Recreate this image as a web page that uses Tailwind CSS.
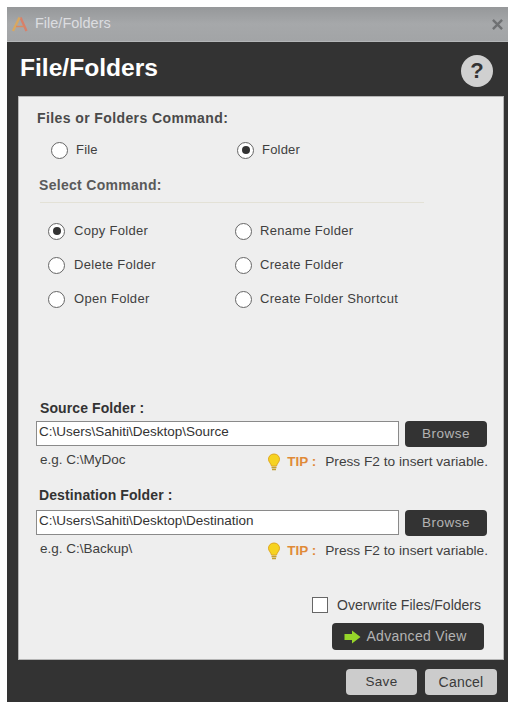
<!doctype html>
<html><head><meta charset="utf-8"><script src="https://cdn.jsdelivr.net/npm/@tailwindcss/browser@4"></script></head>
<body class="bg-white font-['Liberation_Sans',Arial,sans-serif] text-[#3f3f3f]">
<div class="w-[516px] h-[708px] pt-[7px] pl-[7px] overflow-hidden">
<div class="w-[501px] h-[695px] bg-[#333333] flex flex-col">
  <div class="h-[35px] shrink-0 bg-gradient-to-b from-[#96989a] via-[#a6a8aa] to-[#a2a4a6] border-b border-[#b4b6b8] flex items-center pl-[4px] pr-[5px]">
    <svg class="w-[18px] h-[17px]" viewBox="0 0 18 17"><path d="M9.5 1.5 L15.5 15" fill="none" stroke="#d8806a" stroke-width="2.4"/><path d="M8.5 1.5 L2 15" fill="none" stroke="#d8a860" stroke-width="2.4"/><path d="M5 10.5 L13 10.5" stroke="#d88a60" stroke-width="1.5"/></svg>
    <span class="ml-[6px] text-[14.5px] text-[#dcdde0]">File/Folders</span>
    <svg class="ml-auto w-[11px] h-[11px]" viewBox="0 0 12 12"><path d="M1 1 L11 11 M11 1 L1 11" stroke="#6f7173" stroke-width="2.6"/></svg>
  </div>
  <div class="h-[54px] shrink-0 flex items-center justify-between pl-[13px] pr-[15px]">
    <span class="text-[24.6px] font-bold text-white leading-none -mt-[2px]">File/Folders</span>
    <span class="w-[32px] h-[32px] rounded-full bg-[#d0d0d0] flex items-center justify-center text-[22px] font-bold text-[#333333] mt-[3px]">?</span>
  </div>
  <div class="ml-[11px] w-[486px] h-[564px] shrink-0 bg-[#eeeeee] border border-[#b5b5b5] flex flex-col text-[13.5px]">
    <div class="ml-[18px] mt-[13px] h-[16px] leading-[16px] text-[14px] font-bold tracking-[0.4px] text-[#4a4a4a]">Files or Folders Command:</div>
    <div class="flex mt-[15px] h-[18px] items-center pl-[32px] text-[13px] tracking-[0.2px]">
      <div class="w-[186px] flex items-center gap-[8px]"><span class="w-[17px] h-[17px] rounded-full border-[1.5px] border-[#666666] bg-white"></span><span>File</span></div>
      <div class="flex items-center gap-[8px]"><span class="w-[17px] h-[17px] rounded-full border-[1.5px] border-[#666666] bg-white flex items-center justify-center"><span class="w-[8px] h-[8px] rounded-full bg-[#333333]"></span></span><span>Folder</span></div>
    </div>
    <div class="ml-[20px] mt-[18px] h-[16px] leading-[16px] text-[14px] font-bold tracking-[0.3px] text-[#5a5a5a]">Select Command:</div>
    <div class="ml-[21px] mt-[9px] w-[384px] h-[1px] bg-[#e3e1d6]"></div>
    <div class="grid grid-cols-[187px_1fr] auto-rows-[34px] mt-[11px] pl-[29px] items-center text-[13px] tracking-[0.3px]">
      <div class="flex items-center gap-[9px]"><span class="w-[17px] h-[17px] rounded-full border-[1.5px] border-[#666666] bg-white flex items-center justify-center"><span class="w-[8px] h-[8px] rounded-full bg-[#333333]"></span></span><span>Copy Folder</span></div>
      <div class="flex items-center gap-[8px]"><span class="w-[17px] h-[17px] rounded-full border-[1.5px] border-[#666666] bg-white"></span><span>Rename Folder</span></div>
      <div class="flex items-center gap-[9px]"><span class="w-[17px] h-[17px] rounded-full border-[1.5px] border-[#666666] bg-white"></span><span>Delete Folder</span></div>
      <div class="flex items-center gap-[8px]"><span class="w-[17px] h-[17px] rounded-full border-[1.5px] border-[#666666] bg-white"></span><span>Create Folder</span></div>
      <div class="flex items-center gap-[9px]"><span class="w-[17px] h-[17px] rounded-full border-[1.5px] border-[#666666] bg-white"></span><span>Open Folder</span></div>
      <div class="flex items-center gap-[8px]"><span class="w-[17px] h-[17px] rounded-full border-[1.5px] border-[#666666] bg-white"></span><span>Create Folder Shortcut</span></div>
    </div>

    <div class="ml-[21px] mt-[84px] h-[16px] leading-[16px] text-[14px] font-bold tracking-[0.1px] text-[#333333]">Source Folder :</div>
    <div class="flex mt-[5px] ml-[17px] gap-[6px]">
      <div class="w-[363px] h-[25px] bg-white border border-[#8a8a8a] pl-[2px] leading-[19px] text-[13.5px] text-[#333333]">C:\Users\Sahiti\Desktop\Source</div>
      <div class="w-[82px] h-[26px] rounded-[4px] bg-[#333333] text-[#b4b4b4] text-[13.5px] flex items-center justify-center tracking-[0.5px]">Browse</div>
    </div>
    <div class="flex mt-[6px] ml-[21px] h-[18px]">
      <span class="leading-[14px]">e.g. C:\MyDoc</span>
      <div class="ml-auto mr-[15px] flex items-center">
        <svg class="w-[14px] h-[18px]" viewBox="0 0 14 18"><path d="M7 1 C3.5 1 1.5 3.5 1.5 6.2 C1.5 9 4 10.5 4.5 13 L9.5 13 C10 10.5 12.5 9 12.5 6.2 C12.5 3.5 10.5 1 7 1 Z" fill="#f6d320" stroke="#e0a820"/><path d="M4.5 14.5 H9.5 M5 16.5 H9" stroke="#c4a030" stroke-width="1.5"/></svg>
        <span class="ml-[6px] font-bold text-[#e08a38] text-[13.5px] whitespace-pre">TIP :</span>
        <span class="ml-[9px] text-[13.7px] text-[#3f3f3f]">Press F2 to insert variable.</span>
      </div>
    </div>
    <div class="ml-[20px] mt-[16px] h-[16px] leading-[16px] text-[14px] font-bold tracking-[0.1px] text-[#333333]">Destination Folder :</div>
    <div class="flex mt-[7px] ml-[17px] gap-[6px]">
      <div class="w-[363px] h-[25px] bg-white border border-[#8a8a8a] pl-[2px] leading-[19px] text-[13.5px] text-[#333333]">C:\Users\Sahiti\Desktop\Destination</div>
      <div class="w-[82px] h-[26px] rounded-[4px] bg-[#333333] text-[#b4b4b4] text-[13.5px] flex items-center justify-center tracking-[0.5px]">Browse</div>
    </div>
    <div class="flex mt-[6px] ml-[21px] h-[18px]">
      <span class="leading-[14px]">e.g. C:\Backup\</span>
      <div class="ml-auto mr-[15px] flex items-center">
        <svg class="w-[14px] h-[18px]" viewBox="0 0 14 18"><path d="M7 1 C3.5 1 1.5 3.5 1.5 6.2 C1.5 9 4 10.5 4.5 13 L9.5 13 C10 10.5 12.5 9 12.5 6.2 C12.5 3.5 10.5 1 7 1 Z" fill="#f6d320" stroke="#e0a820"/><path d="M4.5 14.5 H9.5 M5 16.5 H9" stroke="#c4a030" stroke-width="1.5"/></svg>
        <span class="ml-[6px] font-bold text-[#e08a38] text-[13.5px] whitespace-pre">TIP :</span>
        <span class="ml-[9px] text-[13.7px] text-[#3f3f3f]">Press F2 to insert variable.</span>
      </div>
    </div>
    <div class="flex items-center justify-end mt-[36px] pr-[22px] h-[18px] gap-[9px]">
      <span class="w-[16px] h-[16px] bg-white border border-[#666666]"></span>
      <span class="text-[14px]">Overwrite Files/Folders</span>
    </div>
    <div class="self-end mr-[19px] mt-[9px] w-[152px] h-[27px] pr-[5px] rounded-[4px] bg-[#333333] text-[#b4b4b4] text-[14px] flex items-center justify-center gap-[5px] tracking-[0.3px]">
      <svg class="w-[17px] h-[14px]" viewBox="0 0 17 14"><path d="M0.5 4 H8 V0.5 L16.5 7 L8 13.5 V10 H0.5 Z" fill="#96d52a"/></svg>
      <span>Advanced View</span>
    </div>
  </div>
  <div class="flex justify-end gap-[8px] mt-[9px] pr-[11px]">
    <div class="w-[71px] h-[26px] rounded-[4px] bg-[#cccccc] text-[#3a3a3a] text-[13.5px] flex items-center justify-center tracking-[0.3px]">Save</div>
    <div class="w-[72px] h-[26px] rounded-[4px] bg-[#cccccc] text-[#3a3a3a] text-[14px] flex items-center justify-center tracking-[0.2px]">Cancel</div>
  </div>
</div>
</div>
</body></html>
